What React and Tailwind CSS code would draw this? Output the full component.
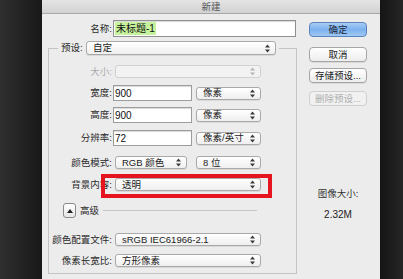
const FONT = { fontFamily: '"Liberation Sans", "Noto Sans CJK SC", sans-serif' }

function Arrows({ dim }) {
  return (
    <svg width="5" height="9" viewBox="0 0 5 9" className="shrink-0">
      <path d="M0 3.5 L2.5 0.5 L5 3.5 Z M0 5.5 L2.5 8.5 L5 5.5 Z" fill={dim ? '#b5b5b5' : '#3a3a3a'} />
    </svg>
  )
}

function Select({ w, value, disabled, h = 'h-[13px]' }) {
  return (
    <div
      className={`flex ${h} ${w} items-center justify-between rounded-[3px] border pl-[6px] pr-[5px] text-[9.5px] leading-none ${
        disabled
          ? 'border-[#d2d2d2] bg-[#f2f2f2]'
          : 'border-[#a9a9a9] bg-gradient-to-b from-white to-[#efefef] text-[#222] shadow-[0_1px_0_rgba(0,0,0,0.08)]'
      }`}
    >
      <span>{value}</span>
      <Arrows dim={disabled} />
    </div>
  )
}

function Field({ value }) {
  return (
    <div className="flex h-[16px] w-[79px] items-center border border-[#9c9c9c] bg-white pl-[1px] text-[10px] text-[#111] shadow-[inset_0_1px_1px_rgba(0,0,0,0.15)]">
      {value}
    </div>
  )
}

function Label({ children, dim }) {
  return (
    <div className={`w-[64px] shrink-0 pr-[1px] text-right text-[9.5px] leading-none ${dim ? 'text-[#aaa]' : 'text-[#2a2a2a]'}`}>
      {children}
    </div>
  )
}

function Button({ children, primary, disabled, className = '' }) {
  return (
    <div
      className={`flex h-[15px] w-[58px] items-center justify-center rounded-[4px] border text-[9.5px] leading-none ${className} ${
        primary
          ? 'border-[#5b84bd] bg-gradient-to-b from-[#a9cdf6] via-[#7db2ee] to-[#9fc8f3] text-[#1b2a40]'
          : disabled
          ? 'border-[#cfcfcf] bg-[#f1f1f1] text-[#b0b0b0]'
          : 'border-[#a5a5a5] bg-gradient-to-b from-white to-[#ededed] text-[#222] shadow-[0_1px_0_rgba(0,0,0,0.08)]'
      }`}
    >
      {children}
    </div>
  )
}

export default function App() {
  return (
    <div className="flex h-[279px] w-[403px] overflow-hidden bg-[#222]" style={FONT}>
      <div className="w-[42px] bg-gradient-to-r from-[#2f2f2f] to-[#181818]" />

      <div className="relative flex w-[338px] flex-col bg-[#ececec]">
        {/* Title bar */}
        <div className="h-[14px] border-b border-[#a8a8a8] bg-gradient-to-b from-[#e4e4e4] to-[#d2d2d2] text-center text-[9.5px] leading-[13px] text-[#555]">
          新建
        </div>

        <div className="flex flex-1">
          {/* Left part */}
          <div className="w-[255px]">
            <div className="mt-[6px] flex h-[17px] items-center">
              <div className="w-[71px] pr-[1px] text-right text-[9.5px] leading-none text-[#2a2a2a]">名称:</div>
              <div className="flex h-[17px] w-[183px] items-center border border-[#8f8f8f] bg-white pl-[1px] shadow-[inset_0_1px_1px_rgba(0,0,0,0.15)]">
                <span className="bg-[#c6f29e] px-[1px] py-[1px] text-[10px] leading-[11px] text-[#111]">未标题-1</span>
              </div>
            </div>

            <fieldset className="ml-[6px] mt-[4px] w-[249px] border border-[#c4c4c4] pb-[6px]">
              <legend className="ml-[9px] px-[3px]">
                <div className="flex items-center">
                  <span className="w-[25px] text-[9.5px] leading-none text-[#2a2a2a]">预设:</span>
                  <Select w="w-[190px]" h="h-[14px]" value="自定" />
                </div>
              </legend>

              <div className="mt-[10px] flex h-[13px] items-center">
                <Label dim>大小:</Label>
                <div className="ml-[2px]"><Select w="w-[146px]" disabled value="" /></div>
              </div>

              <div className="mt-[7px] flex h-[16px] items-center">
                <Label>宽度:</Label>
                <Field value="900" />
                <div className="ml-[4px]"><Select w="w-[65px]" value="像素" /></div>
              </div>

              <div className="mt-[6px] flex h-[16px] items-center">
                <Label>高度:</Label>
                <Field value="900" />
                <div className="ml-[4px]"><Select w="w-[65px]" value="像素" /></div>
              </div>

              <div className="mt-[7px] flex h-[16px] items-center">
                <Label>分辨率:</Label>
                <Field value="72" />
                <div className="ml-[4px]"><Select w="w-[65px]" value="像素/英寸" /></div>
              </div>

              <div className="mt-[10px] flex h-[13px] items-center">
                <Label>颜色模式:</Label>
                <div className="ml-[2px]"><Select w="w-[72px]" value="RGB 颜色" /></div>
                <div className="ml-[9px]"><Select w="w-[65px]" value="8 位" /></div>
              </div>

              <div className="mt-[9px] flex h-[13px] items-center">
                <Label>背景内容:</Label>
                <div className="ml-[2px]"><Select w="w-[146px]" value="透明" /></div>
              </div>

              <div className="mt-[12px] flex h-[15px] items-center">
                <div className="ml-[14px] flex h-[15px] w-[13px] items-center justify-center rounded-[3px] border border-[#8a8a8a] bg-gradient-to-b from-white to-[#e6e6e6]">
                  <svg width="6" height="4" viewBox="0 0 6 4"><path d="M0 4 L3 0 L6 4 Z" fill="#222" /></svg>
                </div>
                <span className="ml-[4px] text-[9.5px] leading-none text-[#2a2a2a]">高级</span>
                <div className="ml-[4px] mr-[39px] h-px flex-1 bg-[#c6c6c6]" />
              </div>

              <div className="mt-[15px] flex h-[13px] items-center">
                <Label>颜色配置文件:</Label>
                <div className="ml-[2px]"><Select w="w-[146px]" value="sRGB IEC61966-2.1" /></div>
              </div>

              <div className="mt-[8px] flex h-[13px] items-center">
                <Label>像素长宽比:</Label>
                <div className="ml-[2px]"><Select w="w-[146px]" value="方形像素" /></div>
              </div>
            </fieldset>
          </div>

          {/* Right column */}
          <div className="flex flex-1 flex-col items-center pr-[1px]">
            <Button primary className="mt-[8px]">确定</Button>
            <Button className="mt-[10px]">取消</Button>
            <Button className="mt-[6px]">存储预设...</Button>
            <Button disabled className="mt-[8px]">删除预设...</Button>
            <div className="mt-[83px] text-[9.5px] leading-none text-[#333]">图像大小:</div>
            <div className="mt-[11px] text-[10px] leading-none text-[#222]">2.32M</div>
          </div>
        </div>

        {/* red highlight box */}
        <div className="absolute left-[59px] top-[174px] h-[24px] w-[171px] border-4 border-[#e5141f]" />
      </div>

      <div className="flex-1 bg-gradient-to-r from-[#151515] to-[#262626]" />
    </div>
  )
}
